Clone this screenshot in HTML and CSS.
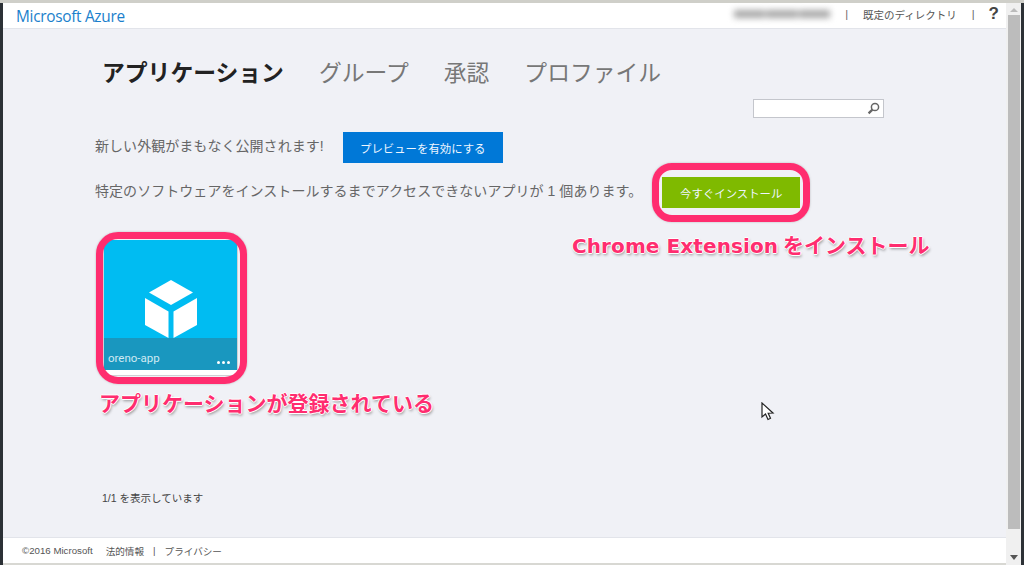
FILE: index.html
```html
<!DOCTYPE html>
<html lang="ja">
<head>
<meta charset="UTF-8">
<title>アプリケーション</title>
<link rel="stylesheet" href="styles.css">
</head>
<body>
<div class="window">
    <div class="page">
        <header class="topbar">
            <a class="brand">Microsoft Azure</a>
            <div class="topbar-right">
                <div class="blurred-user"><span></span><span></span><span></span></div>
                <span class="sep">|</span>
                <span class="directory">既定のディレクトリ</span>
                <span class="sep">|</span>
                <span class="help">?</span>
            </div>
        </header>

        <main class="content">
            <nav class="tabs">
                <a class="tab active">アプリケーション</a>
                <a class="tab">グループ</a>
                <a class="tab">承認</a>
                <a class="tab">プロファイル</a>
            </nav>

            <div class="search-row">
                <div class="search-box">
                    <svg width="13" height="13" viewBox="0 0 13 13">
                        <circle cx="8" cy="5" r="3.6" fill="none" stroke="#666" stroke-width="1.5"/>
                        <path d="M5.4 7.6 L1.6 11.4" stroke="#666" stroke-width="2.2"/>
                    </svg>
                </div>
            </div>

            <div class="notice">
                <span>新しい外観がまもなく公開されます!</span>
                <button class="btn btn-blue">プレビューを有効にする</button>
            </div>
            <div class="notice notice-install">
                <span>特定のソフトウェアをインストールするまでアクセスできないアプリが 1 個あります。</span>
                <button class="btn btn-green">今すぐインストール</button>
            </div>

            <div class="tile">
                <div class="tile-icon">
                    <svg width="52" height="58" viewBox="0 0 52 58">
                        <path d="M26 0 L48 12.5 L26 25 L4 12.5 Z" fill="#fff"/>
                        <path d="M0 18 L23.5 31.5 L23.5 58 L0 45 Z" fill="#fff"/>
                        <path d="M28.5 31.5 L52 18 L52 45 L28.5 58 Z" fill="#fff"/>
                    </svg>
                </div>
                <div class="tile-label">
                    <span>oreno-app</span>
                    <span class="tile-dots"><i></i><i></i><i></i></span>
                </div>
            </div>

            <div class="paging">1/1 を表示しています</div>
        </main>

        <footer class="footer">
            <span class="copyright">©2016 Microsoft</span>
            <a>法的情報</a>
            <span class="footer-sep">|</span>
            <a>プライバシー</a>
        </footer>
    </div>

    <div class="scrollbar">
        <div class="arrow arrow-up"></div>
        <div class="thumb"></div>
        <div class="arrow arrow-down"></div>
    </div>
</div>

<!-- annotations drawn on top of the screenshot -->
<div class="mark mark-install"></div>
<div class="mark mark-tile"></div>
<div class="callout callout-install"><span class="callout-latin">Chrome Extension</span> をインストール</div>
<div class="callout callout-tile">アプリケーションが登録されている</div>

<svg class="cursor" width="14" height="20" viewBox="0 0 14 20">
    <path d="M1 1 L1 15 L4.5 12 L7 17.5 L9.5 16.3 L7.2 11.2 L12 11 Z" fill="#fff" stroke="#222" stroke-width="1.2"/>
</svg>
</body>
</html>
```

FILE: styles.css
```css
* {
    box-sizing: border-box;
}

html, body {
    margin: 0;
    padding: 0;
    height: 100%;
    overflow: hidden;
}

body {
    font-family: "Liberation Sans", "Noto Sans CJK JP", sans-serif;
    background-color: #23272b;
    color: #666;
}

.window {
    display: flex;
    height: 565px;
    padding: 3px 3px 0 3px;
    background: linear-gradient(#cfcfc9 3px, #2c3136 3px);
}

.page {
    flex: 1;
    display: flex;
    flex-direction: column;
    min-width: 0;
    background-color: #f0f1f6;
}

.topbar {
    height: 26px;
    flex: none;
    display: flex;
    align-items: center;
    justify-content: space-between;
    padding: 0 7px 0 13px;
    background-color: #fff;
    border-bottom: 1px solid #e2e4ea;
}

.brand {
    font-family: "Open Sans", sans-serif;
    font-size: 15.4px;
    letter-spacing: -0.3px;
    color: #1b7fcc;
    padding-top: 1px;
}

.topbar-right {
    display: flex;
    align-items: center;
    padding-bottom: 3px;
    font-size: 10.5px;
    color: #555;
}

.blurred-user {
    width: 96px;
    display: flex;
    gap: 1px;
    height: 8px;
    filter: blur(3px);
    margin-right: 15px;
}

.blurred-user span {
    flex: 1;
    background-color: #a8a8a8;
}

.sep {
    color: #666;
    font-size: 11px;
}

.directory {
    margin: 0 15px 0 15px;
}

.help {
    margin-left: 14px;
    font-size: 17px;
    font-weight: bold;
    color: #444;
}

.content {
    flex: 1;
    display: flex;
    flex-direction: column;
    padding-left: 92px;
    min-height: 0;
}

.tabs {
    display: flex;
    gap: 35px;
    padding: 28px 0 0 7px;
    height: 70px;
    flex: none;
    font-size: 22.8px;
    line-height: 32px;
    color: #777;
}

.tab.active {
    font-weight: bold;
    color: #222;
}

.search-row {
    height: 33px;
    flex: none;
    padding-left: 658px;
}

.search-box {
    width: 131px;
    height: 19px;
    background-color: #fff;
    border: 1px solid #c4c6cc;
    display: flex;
    align-items: center;
    justify-content: flex-end;
    padding-right: 3px;
}

.notice {
    height: 31px;
    flex: none;
    display: flex;
    align-items: center;
    font-size: 14px;
    letter-spacing: 0.05px;
    color: #666;
}

.notice > span {
    padding-bottom: 5px;
}

.notice .btn-blue {
    margin-left: 19px;
}

.notice-install {
    margin-top: 14px;
}

.notice-install .btn-green {
    margin-left: 20px;
}

.btn {
    border: none;
    height: 31px;
    color: #eef6ff;
    font-family: inherit;
    font-size: 11.4px;
    padding: 0;
}

.btn-blue {
    width: 160px;
    background-color: #0078d7;
}

.btn-green {
    width: 138px;
    background-color: #7fba00;
}

.tile {
    width: 135px;
    height: 136px;
    flex: none;
    margin: 32px 0 0 8px;
    display: flex;
    flex-direction: column;
    background-color: #fff;
    border: 1px solid #cfd0d4;
    border-top: none;
    padding-bottom: 5px;
}

.tile-icon {
    flex: 1;
    display: flex;
    align-items: flex-end;
    justify-content: center;
    background-color: #00bcf2;
}

.tile-icon svg {
    display: block;
}

.tile-label {
    height: 32px;
    flex: none;
    display: flex;
    align-items: flex-end;
    justify-content: space-between;
    padding: 0 7px 5px 4px;
    background-color: #1997bf;
    color: #cfeaf3;
    font-family: "Roboto", sans-serif;
    font-size: 11.5px;
    line-height: 14px;
}

.tile-dots {
    display: flex;
    gap: 2px;
    padding-bottom: 1px;
}

.tile-dots i {
    width: 3px;
    height: 3px;
    border-radius: 50%;
    background-color: #fff;
}

.paging {
    margin: 114px 0 0 7px;
    font-size: 10.5px;
    color: #444;
}

.footer {
    height: 28px;
    flex: none;
    display: flex;
    align-items: center;
    padding-left: 19px;
    background-color: #fff;
    border-top: 1px solid #e2e4ea;
    border-bottom: 2px solid #d8d8d3;
    font-size: 9.6px;
    color: #555;
}

.copyright {
    font-size: 9.7px;
    margin-right: 13px;
}

.footer-sep {
    margin: 0 9px;
}

.scrollbar {
    width: 15px;
    flex: none;
    display: flex;
    flex-direction: column;
    align-items: center;
    padding: 0 1px;
    background-color: #f0f0f0;
}

.thumb {
    flex: 1;
    width: 12px;
    margin-bottom: 26px;
    background-color: #bcbcbc;
}

.arrow {
    width: 0;
    height: 0;
    flex: none;
    border-left: 4px solid transparent;
    border-right: 4px solid transparent;
}

.arrow-up {
    margin: 5px 0 3px;
    border-bottom: 4px solid #bbb;
}

.arrow-down {
    margin-bottom: 5px;
    border-top: 5px solid #555;
}

.mark {
    position: absolute;
    border: 7px solid #ff2d6f;
    box-shadow: 0 0 2px rgba(120, 120, 120, 0.5);
}

.mark-install {
    left: 652px;
    top: 163px;
    width: 158px;
    height: 59px;
    border-radius: 20px;
}

.mark-tile {
    left: 96px;
    top: 232px;
    width: 151px;
    height: 152px;
    border-radius: 22px;
}

.callout {
    position: absolute;
    font-family: "Noto Sans CJK JP", sans-serif;
    font-weight: bold;
    font-size: 21px;
    line-height: 28px;
    white-space: nowrap;
    color: #ff2d6f;
    text-shadow: 1px 0 0 #fff, -1px 0 0 #fff, 0 1px 0 #fff, 0 -1px 0 #fff, 1px 2px 3px rgba(0, 0, 0, 0.4);
}

.callout-latin {
    font-family: "DejaVu Sans", sans-serif;
    font-size: 20px;
    letter-spacing: 0.1px;
}

.callout-install {
    left: 572px;
    top: 230px;
}

.callout-tile {
    left: 99px;
    top: 388px;
}

.cursor {
    position: absolute;
    left: 761px;
    top: 402px;
}
```
